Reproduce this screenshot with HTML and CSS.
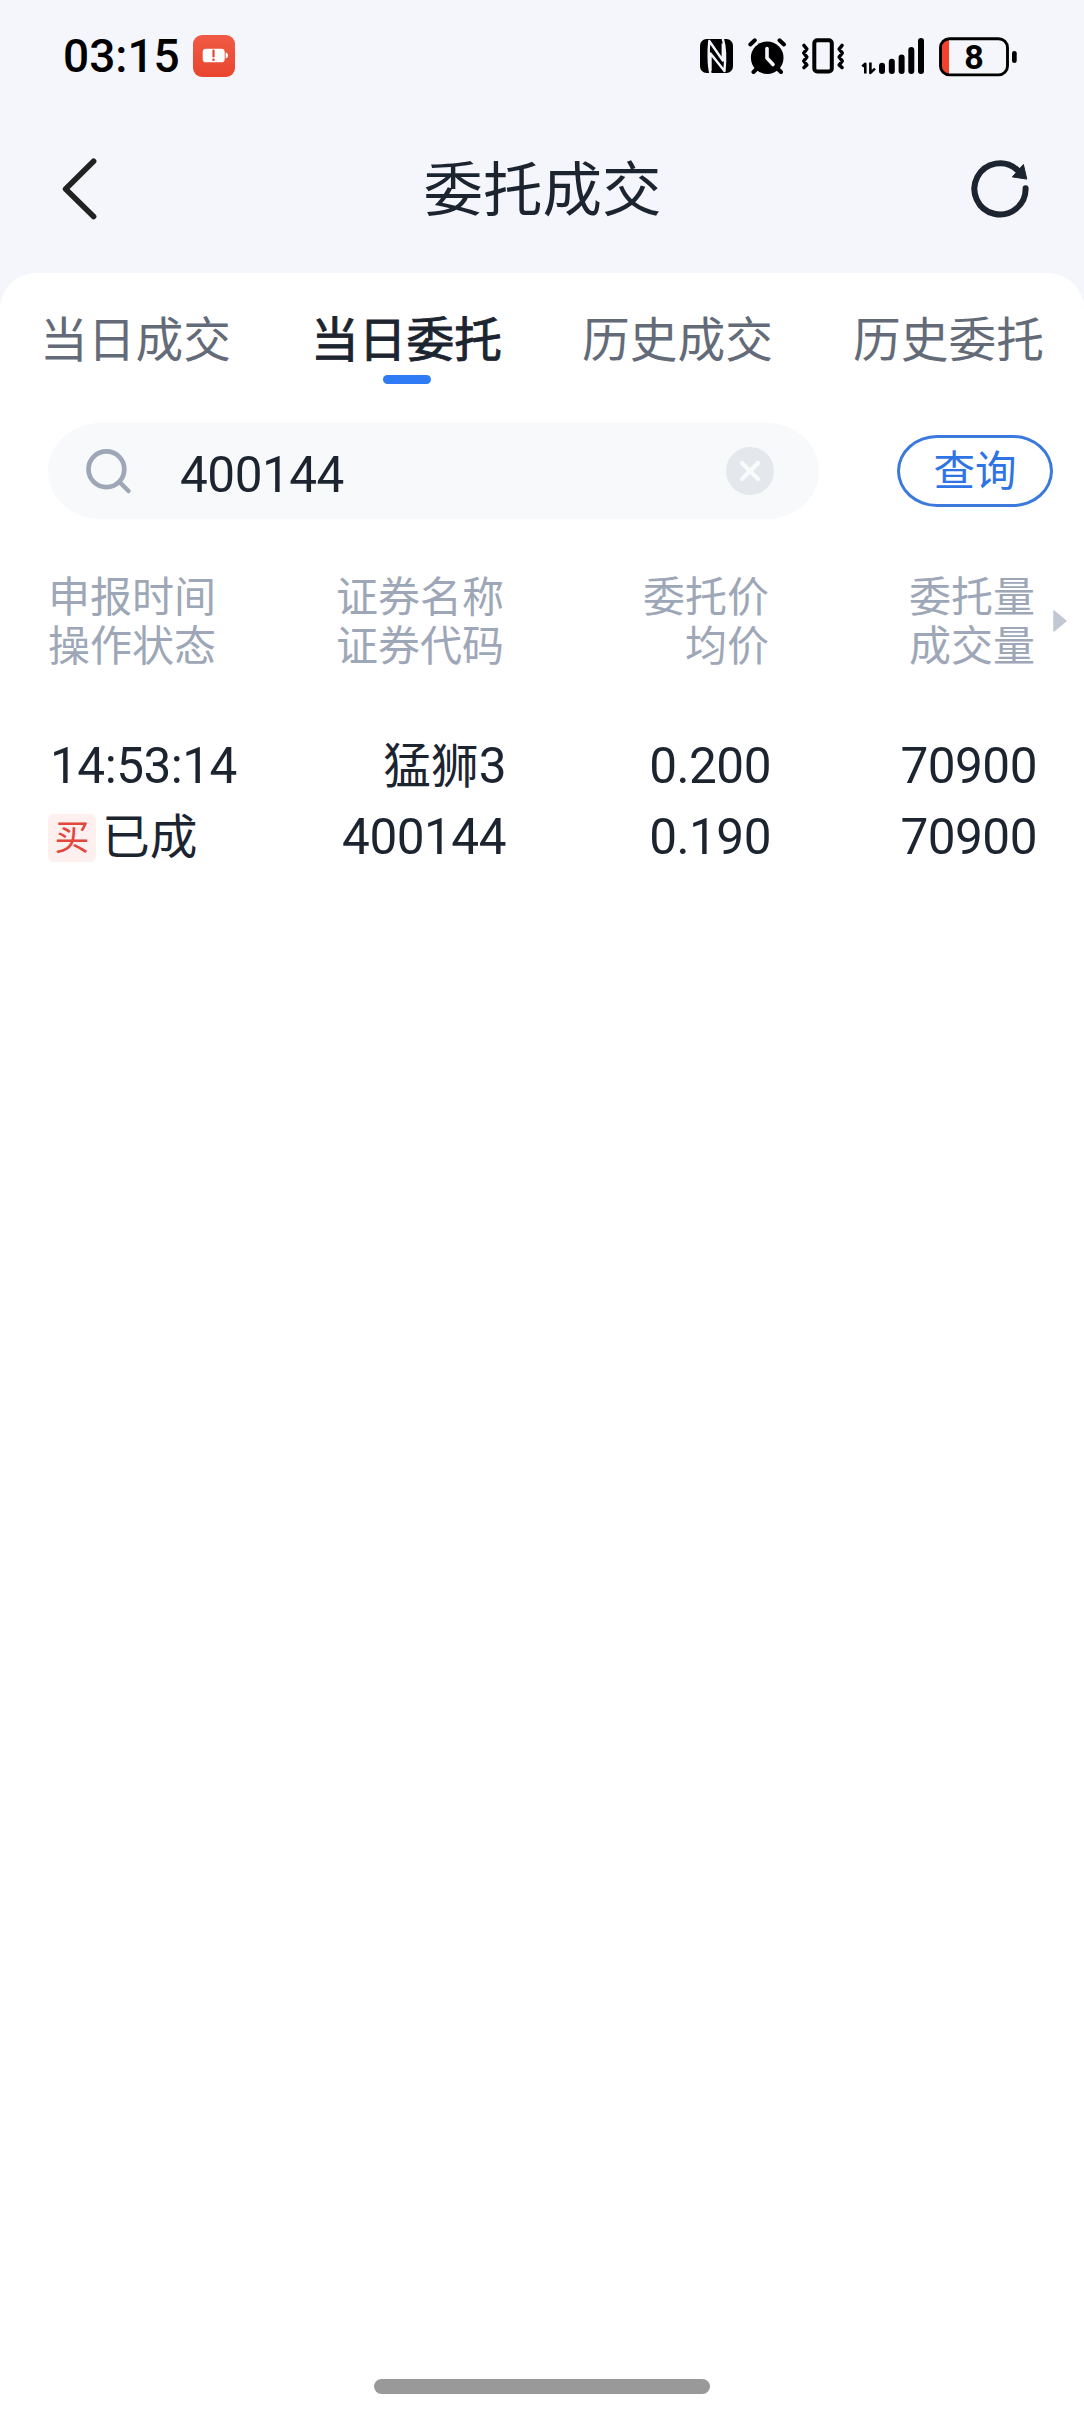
FILE: index.html
```html
<!DOCTYPE html>
<html lang="zh-CN">
<head>
<meta charset="utf-8">
<title>委托成交</title>
<link rel="stylesheet" href="styles.css">
</head>
<body>
<div class="screen">
  <header class="status">
    <div class="status-left">
      <span class="clock">03:15</span>
      <svg class="low-power" width="42" height="42" viewBox="0 0 42 42">
        <defs><linearGradient id="warm" x1="0" y1="0" x2="0" y2="1"><stop offset="0" stop-color="#f05a45"/><stop offset="1" stop-color="#e8452e"/></linearGradient></defs>
        <rect width="42" height="42" rx="9" fill="url(#warm)"/>
        <rect x="9.7" y="13.7" width="22" height="13.6" rx="3.4" fill="#fff"/>
        <path d="M32.6 17.6c1.6.2 2.4 1.200 2.400 2.900s-.8 2.700-2.400 2.900z" fill="#fff"/>
        <path d="M20.500 15.600v5.800" stroke="#e8452e" stroke-width="2.200" stroke-linecap="round"/>
        <circle cx="20.500" cy="24.700" r="1.300" fill="#e8452e"/>
      </svg>
    </div>
    <svg class="status-icons" width="320" height="42" viewBox="700 35 320 42">
      <rect x="700" y="39" width="33" height="34" rx="6.500"/>
      <path d="M710.500 73.500C708.300 66 708.300 50 709.300 41L722.800 60.500V43.500M710.500 71V53.500L724.500 71C725.400 61 725.300 47 722.800 38.500" fill="none" stroke="#f4f6fb" stroke-width="2.400" stroke-linejoin="round"/>
      <circle cx="767.200" cy="57.700" r="16.300"/>
      <path d="M750.300 44.500l4.500-4.200M784 44.500l-4.500-4.200M753.500 72l4-4M781 72l-4-4" stroke="#000" stroke-width="4" stroke-linecap="round"/>
      <path d="M767 48.500v9.500l6 6.500" fill="none" stroke="#f4f6fb" stroke-width="3.600" stroke-linecap="round" stroke-linejoin="round"/>
      <rect x="814.300" y="40.300" width="17.500" height="31.200" rx="3" fill="none" stroke="#000" stroke-width="4"/>
      <path d="M804 45.500l2.800 3.500-3 4 3 4-3 4 3 4-2.800 2.500M842 45.500l-2.800 3.500 3 4-3 4 3 4-3 4 2.800 2.500" fill="none" stroke="#000" stroke-width="3.600" stroke-linecap="round" stroke-linejoin="round"/>
      <path d="M862.300 66.500l3-2.700v9.600" fill="none" stroke="#000" stroke-width="2.600" stroke-linejoin="round"/>
      <path d="M870.400 62.500v10.400l4.600-4.300" fill="none" stroke="#000" stroke-width="2.600" stroke-linejoin="round"/>
      <rect x="879" y="62.700" width="6" height="11.300" rx="3"/>
      <rect x="888.800" y="58.700" width="6" height="15.300" rx="3"/>
      <rect x="898.600" y="54.600" width="6" height="19.400" rx="3"/>
      <rect x="908.300" y="47" width="6" height="27" rx="3"/>
      <rect x="918" y="38" width="6" height="36" rx="3"/>
      <path d="M949 39v36h-1q-6-1-6-8v-20q0-7 6-8z" fill="#f4412b"/>
      <rect x="940.500" y="38.700" width="67" height="36.200" rx="9" fill="none" stroke="#000" stroke-width="2.900"/>
      <rect x="1012" y="51" width="4.700" height="12" rx="2.300"/>
      <text class="charge" x="974" y="69.200" text-anchor="middle">8</text>
    </svg>
  </header>

  <nav class="titlebar">
    <svg width="40" height="70" viewBox="60 154 40 70">
      <path d="M93.600 161.300L65.600 189l28 27.500" fill="none" stroke="#222" stroke-width="5.600" stroke-linecap="round" stroke-linejoin="round"/>
    </svg>
    <h1>委托成交</h1>
    <svg width="62" height="62" viewBox="969 157.500 62 62">
      <path d="M1025.600 187.800a25.600 25.600 0 1 1-8.300-18.300" fill="none" stroke="#1c2430" stroke-width="6" stroke-linecap="round"/>
      <path d="M1023.400 164l3.400 14.600-14.400-2.200z" fill="#1c2430" stroke="#1c2430" stroke-linejoin="round"/>
    </svg>
  </nav>

  <main class="panel">
    <div class="tabs">
      <a class="tab">当日成交</a>
      <a class="tab active">当日委托</a>
      <a class="tab">历史成交</a>
      <a class="tab">历史委托</a>
    </div>

    <div class="search-row">
      <div class="search">
        <svg width="48" height="48" viewBox="84 447 48 48">
          <circle cx="106.400" cy="469.200" r="17.900" fill="none" stroke="#9ea7b7" stroke-width="4.700"/>
          <path d="M119.500 482l9 9" stroke="#9ea7b7" stroke-width="4.500" stroke-linecap="round"/>
        </svg>
        <span class="query num">400144</span>
        <svg width="48" height="48" viewBox="0 0 48 48">
          <circle cx="24" cy="24" r="24" fill="#e4e8ed"/>
          <path d="M16 16l16 16M32 16l-16 16" stroke="#fafbfc" stroke-width="4.300" stroke-linecap="round"/>
        </svg>
      </div>
      <button class="submit">查询</button>
    </div>

    <div class="grid head">
      <div>申报时间<br>操作状态</div>
      <div>证券名称<br>证券代码</div>
      <div>委托价<br>均价</div>
      <div>委托量<br>成交量</div>
      <svg width="14" height="22" viewBox="0 0 14 22"><path d="M1 1v20L13 11z" fill="#c2c8d3" stroke="#c2c8d3" stroke-width="1.500" stroke-linejoin="round"/></svg>
    </div>

    <div class="grid order">
      <div class="num time">14:53:14</div>
      <div class="num"><span class="han">猛狮</span>3</div>
      <div class="num">0.200</div>
      <div class="num">70900</div>
      <div class="state"><span class="buy">买</span><span class="done">已成</span></div>
      <div class="num">400144</div>
      <div class="num">0.190</div>
      <div class="num">70900</div>
    </div>
  </main>
  <div class="home"></div>
</div>
</body>
</html>
```
FILE: styles.css
```css
* { box-sizing: border-box; }

body {
  margin: 0;
  background: #f4f6fb;
  color: #1c2430;
  font-family: "Noto Sans CJK SC", sans-serif;
}

.screen {
  display: flex;
  flex-direction: column;
  width: 1084px;
  height: 2412px;
  background: #f4f6fb;
}

.status {
  display: flex;
  justify-content: space-between;
  align-items: center;
  height: 112px;
  padding: 0 64px 0 63px;
  color: #000;
}

.status-left {
  display: flex;
  align-items: center;
}

.clock {
  width: 130px;
  font: 500 46px/56px Roboto, sans-serif;
  letter-spacing: 0;
}

.charge { font: 700 34px Roboto, sans-serif; }

.titlebar {
  display: flex;
  justify-content: space-between;
  align-items: center;
  height: 153px;
  padding: 0 53px 0 60px;
  margin-bottom: 8px;
}

.titlebar h1 {
  margin: 0 0 0 16px;
  padding-bottom: 8px;
  font-size: 59.500px;
  font-weight: 400;
  line-height: 80px;
}

.panel {
  flex: 1;
  background: #fff;
  border-radius: 36px 36px 0 0;
}

.tabs {
  display: grid;
  grid-template-columns: repeat(4, 1fr);
  height: 150px;
  padding-top: 30px;
}

.tab {
  display: flex;
  flex-direction: column;
  align-items: center;
  font-size: 47.700px;
  line-height: 68px;
  color: #636b79;
}

.tab.active {
  color: #1c2430;
  -webkit-text-stroke: 0.900px #1c2430;
}

.tab.active::after {
  content: "";
  width: 48px;
  height: 9px;
  margin-top: 4px;
  border-radius: 4.500px;
  background: #2f7bf6;
}

.search-row {
  display: flex;
  align-items: center;
  justify-content: space-between;
  padding: 0 31px 0 48px;
}

.search {
  display: flex;
  align-items: center;
  width: 771px;
  height: 96px;
  padding: 0 45px 0 36px;
  border-radius: 52px / 48px;
  background: #f8f9fb;
}

.num {
  font-family: Roboto, "Noto Sans CJK SC", sans-serif;
  font-size: 49.500px;
  letter-spacing: -0.500px;
}

.query {
  flex: 1;
  padding: 8px 0 0 48px;
}

.submit {
  width: 156px;
  height: 72px;
  padding: 0 0 6px;
  border: 3px solid #3b79dc;
  border-radius: 40px / 36px;
  background: #fff;
  color: #2f74e4;
  font: 400 41.500px/56px "Noto Sans CJK SC", sans-serif;
}

.grid {
  display: grid;
  grid-template-columns: 228px 228px 265px 266px 14px;
  padding-left: 48px;
  text-align: right;
}

.grid > :nth-child(4n + 1) { text-align: left; }

.head {
  align-items: center;
  margin-top: 50px;
  color: #9ea7b7;
  font-size: 42px;
  line-height: 49px;
}

.head svg { margin: 6px 0 0 18px; }

.order {
  grid-template-columns: 228px 230px 265px 266px;
  margin-top: 64px;
  grid-auto-rows: 71px;
  line-height: 71px;
}

.time { padding-left: 2px; }

.han {
  font-size: 47.700px;
  letter-spacing: 0;
}

.state {
  display: flex;
  align-items: center;
  font-size: 47.700px;
}

.done {
  padding-bottom: 7px;
  line-height: 62px;
}

.buy {
  width: 48px;
  height: 48px;
  margin-right: 6px;
  border-radius: 6px;
  background: #fdf0ef;
  color: #e2463c;
  font-size: 35px;
  line-height: 42px;
  text-align: center;
}

.home {
  position: absolute;
  left: 374px;
  top: 2379px;
  width: 336px;
  height: 15px;
  border-radius: 8px;
  background: #999;
}
```
